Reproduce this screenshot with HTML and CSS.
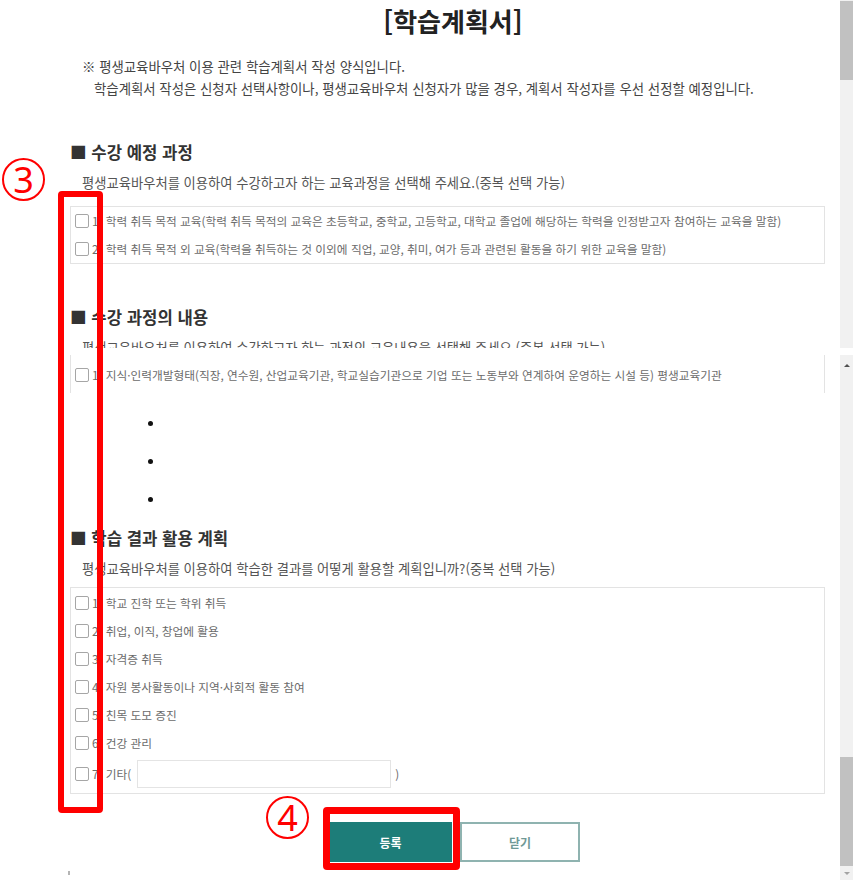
FILE: index.html
```html
<!DOCTYPE html>
<html lang="ko">
<head>
<meta charset="utf-8">
<title>학습계획서</title>
<link rel="stylesheet" href="styles.css">
</head>
<body>
<div class="screen">
  <main class="page">
    <h1 class="title">[학습계획서]</h1>
    <div class="notes">
      <p class="note">※ 평생교육바우처 이용 관련 학습계획서 작성 양식입니다.</p>
      <p class="note indent">학습계획서 작성은 신청자 선택사항이나, 평생교육바우처 신청자가 많을 경우, 계획서 작성자를 우선 선정할 예정입니다.</p>
    </div>

    <section class="sec sec-1">
      <h2 class="sec-title">■ 수강 예정 과정</h2>
      <p class="sec-desc">평생교육바우처를 이용하여 수강하고자 하는 교육과정을 선택해 주세요.(중복 선택 가능)</p>
      <div class="opt-box">
        <label class="opt"><span class="chk"></span><span class="opt-text">1) 학력 취득 목적 교육(학력 취득 목적의 교육은 초등학교, 중학교, 고등학교, 대학교 졸업에 해당하는 학력을 인정받고자 참여하는 교육을 말함)</span></label>
        <label class="opt"><span class="chk"></span><span class="opt-text">2) 학력 취득 목적 외 교육(학력을 취득하는 것 이외에 직업, 교양, 취미, 여가 등과 관련된 활동을 하기 위한 교육을 말함)</span></label>
      </div>
    </section>

    <section class="sec sec-2">
      <h2 class="sec-title">■ 수강 과정의 내용</h2>
      <div class="clip">
        <p class="sec-desc">평생교육바우처를 이용하여 수강하고자 하는 과정의 교육내용을 선택해 주세요.(중복 선택 가능)</p>
      </div>
      <div class="opt-box open">
        <label class="opt"><span class="chk"></span><span class="opt-text">1) 지식·인력개발형태(직장, 연수원, 산업교육기관, 학교실습기관으로 기업 또는 노동부와 연계하여 운영하는 시설 등) 평생교육기관</span></label>
      </div>
      <ul class="dots">
        <li class="dot-item"><span class="dot"></span></li>
        <li class="dot-item"><span class="dot"></span></li>
        <li class="dot-item"><span class="dot"></span></li>
      </ul>
    </section>

    <section class="sec sec-3">
      <h2 class="sec-title">■ 학습 결과 활용 계획</h2>
      <p class="sec-desc">평생교육바우처를 이용하여 학습한 결과를 어떻게 활용할 계획입니까?(중복 선택 가능)</p>
      <div class="opt-box full">
        <label class="opt"><span class="chk"></span><span class="opt-text">1) 학교 진학 또는 학위 취득</span></label>
        <label class="opt"><span class="chk"></span><span class="opt-text">2) 취업, 이직, 창업에 활용</span></label>
        <label class="opt"><span class="chk"></span><span class="opt-text">3) 자격증 취득</span></label>
        <label class="opt"><span class="chk"></span><span class="opt-text">4) 자원 봉사활동이나 지역·사회적 활동 참여</span></label>
        <label class="opt"><span class="chk"></span><span class="opt-text">5) 친목 도모 증진</span></label>
        <label class="opt"><span class="chk"></span><span class="opt-text">6) 건강 관리</span></label>
        <label class="opt opt-etc"><span class="chk"></span><span class="opt-text">7) 기타(</span><span class="etc-input"></span><span class="opt-text close-paren">)</span></label>
      </div>
    </section>

    <div class="btns">
      <button class="btn btn-primary" type="button">등록</button>
      <button class="btn btn-line" type="button">닫기</button>
    </div>
    <span class="tiny-mark"></span>

    <span class="mark mark-3">3</span>
    <span class="redbox redbox-3"></span>
    <span class="mark mark-4">4</span>
    <span class="redbox redbox-4"></span>
  </main>

  <div class="vscroll">
    <div class="sb sb-top"><div class="thumb thumb-top"></div></div>
    <div class="sb sb-bottom">
      <div class="sb-btn sb-up"><span class="tri tri-up"></span></div>
      <div class="sb-fill"></div>
      <div class="thumb thumb-bottom"></div>
      <div class="sb-btn sb-down"><span class="tri tri-down"></span></div>
    </div>
  </div>
</div>
</body>
</html>
```

FILE: styles.css
```css
* {
  box-sizing: border-box;
}

html, body {
  margin: 0;
  padding: 0;
  background: #ffffff;
}

body {
  width: 868px;
  height: 889px;
  overflow: hidden;
  font-family: "Noto Sans CJK KR", "Noto Sans", sans-serif;
  color: #333;
}

.screen {
  display: flex;
  width: 868px;
  height: 889px;
}

.page {
  position: relative;
  width: 840px;
  height: 889px;
  display: flex;
  flex-direction: column;
  overflow: hidden;
}

.title {
  margin: 6px 0 0;
  padding-left: 66px;
  text-align: center;
  font-size: 26px;
  line-height: 30px;
  font-weight: 700;
  letter-spacing: 0;
  color: #222;
}

.notes {
  margin-top: 19px;
  padding-left: 82px;
}

.note {
  margin: 0;
  font-size: 13.4px;
  line-height: 22px;
  color: #444;
  white-space: nowrap;
}

.indent {
  padding-left: 12px;
}

.sec {
  display: flex;
  flex-direction: column;
  padding-left: 70px;
}

.sec-1 { margin-top: 42px; }
.sec-2 { margin-top: 42px; }
.sec-3 { margin-top: 9px; }

.sec-title {
  margin: 0;
  font-size: 16.7px;
  line-height: 22px;
  font-weight: 700;
  color: #333;
  white-space: nowrap;
}

.sec-desc {
  margin: 10px 0 0 12px;
  font-size: 13.3px;
  line-height: 20px;
  color: #555;
  white-space: nowrap;
}

.clip {
  margin-top: 10px;
  height: 10px;
  overflow: hidden;
}

.clip .sec-desc {
  margin-top: 0;
}

.opt-box {
  width: 755px;
  margin-top: 13px;
  border: 1px solid #e3e3e3;
  display: flex;
  flex-direction: column;
}

.opt-box.open {
  margin-top: 7px;
  height: 38px;
  padding-top: 6px;
  border-top: 0;
  border-bottom: 0;
}

.opt-box.full {
  margin-top: 8px;
  padding: 1px 0 2px;
}

.opt {
  display: flex;
  align-items: center;
  height: 28px;
  white-space: nowrap;
}

.opt-etc {
  height: 34px;
}

.chk {
  flex: none;
  width: 14px;
  height: 14px;
  margin-left: 4px;
  margin-right: 3px;
  border: 1px solid #a6a6a6;
  border-radius: 2px;
  background: #fff;
}

.opt-text {
  font-size: 11.7px;
  line-height: 16px;
  color: #6b6b6b;
}

.etc-input {
  flex: none;
  width: 254px;
  height: 28px;
  margin-left: 6px;
  border: 1px solid #e4e4e4;
  background: #fff;
}

.close-paren {
  margin-left: 4px;
}

.dots {
  list-style: none;
  margin: 11px 0 0;
  padding: 0;
}

.dot-item {
  height: 38px;
  display: flex;
  align-items: center;
  padding-left: 78px;
}

.dot {
  width: 5px;
  height: 5px;
  border-radius: 50%;
  background: #111;
}

.btns {
  display: flex;
  gap: 8px;
  margin-top: 28px;
  padding-left: 329px;
}

.btn {
  height: 40px;
  margin: 0;
  padding: 0;
  font-family: "Noto Sans CJK KR", "Noto Sans", sans-serif;
  font-size: 12px;
  font-weight: 700;
  cursor: pointer;
}

.btn-primary {
  width: 123px;
  border: 0;
  background: #1d7d79;
  color: #ffffff;
}

.btn-line {
  width: 120px;
  border: 2px solid #8fb3b0;
  background: #ffffff;
  color: #6f9996;
}

.tiny-mark {
  display: block;
  width: 2px;
  height: 4px;
  margin: 9px 0 0 68px;
  background: #b5b5b5;
}

/* annotations */
.mark {
  position: absolute;
  width: 43px;
  height: 43px;
  border: 2.5px solid #ff0000;
  border-radius: 50%;
  display: flex;
  align-items: center;
  justify-content: center;
  font-family: "Noto Sans", "Liberation Sans", sans-serif;
  font-size: 36px;
  line-height: 1;
  font-weight: 400;
  color: #ff0000;
}

.mark-3 {
  left: 2px;
  top: 158px;
}

.mark-4 {
  left: 266px;
  top: 796px;
}

.redbox {
  position: absolute;
  border-style: solid;
  border-color: #ff0000;
  border-radius: 4px;
}

.redbox-3 {
  left: 58px;
  top: 191px;
  width: 45px;
  height: 622px;
  border-width: 6px;
}

.redbox-4 {
  left: 323px;
  top: 807px;
  width: 137px;
  height: 63px;
  border-width: 7px;
}

/* scrollbar pieces */
.vscroll {
  width: 13px;
  display: flex;
  flex-direction: column;
}

.sb {
  background: #f1f1f1;
}

.sb-top {
  height: 348px;
  padding-top: 1px;
}

.thumb {
  background: #c1c1c1;
}

.thumb-top {
  height: 79px;
}

.sb-bottom {
  margin-top: 7px;
  height: 525px;
  display: flex;
  flex-direction: column;
}

.sb-btn {
  display: flex;
  align-items: center;
  justify-content: center;
}

.sb-up {
  height: 20px;
}

.sb-down {
  height: 14px;
}

.sb-fill {
  flex: 1;
}

.thumb-bottom {
  height: 109px;
}

.tri {
  width: 0;
  height: 0;
  border-left: 3px solid transparent;
  border-right: 3px solid transparent;
}

.tri-up {
  border-bottom: 3px solid #505050;
}

.tri-down {
  border-top: 3px solid #a3a3a3;
}
```
